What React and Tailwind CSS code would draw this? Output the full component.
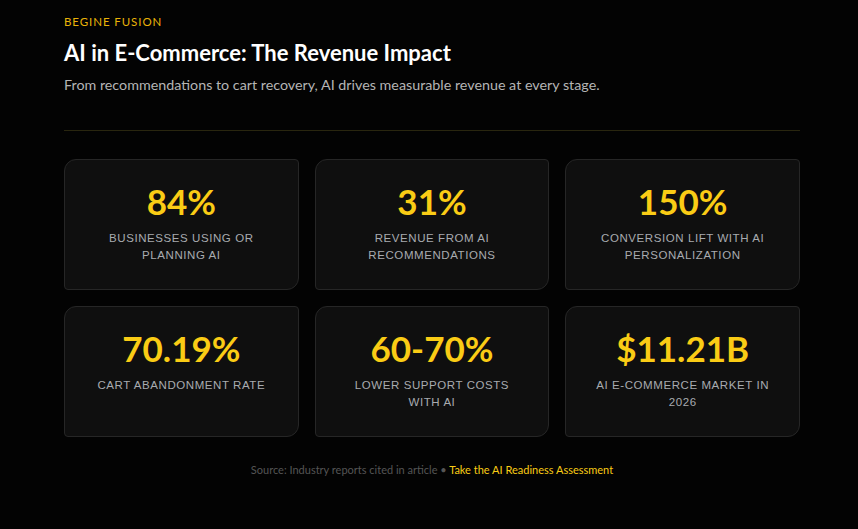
import React from "react";

const stats = [
  { value: "84%", label: "Businesses using or planning AI" },
  { value: "31%", label: "Revenue from AI recommendations" },
  { value: "150%", label: "Conversion lift with AI personalization" },
  { value: "70.19%", label: "Cart abandonment rate" },
  { value: "60-70%", label: "Lower support costs with AI" },
  { value: "$11.21B", label: "AI e-commerce market in 2026" },
];

const StatCard = ({ value, label }) => (
  <div className="flex h-[131px] flex-col items-center rounded-tl-xl rounded-tr-[4px] rounded-br-xl rounded-bl-[4px] border border-[#262626] bg-[#0f0f0f] px-6 pt-[24px] text-center">
    <div className="text-[35px] font-bold leading-none text-[#facc15]">{value}</div>
    <div
      className="mt-[11px] max-w-[185px] text-[11.5px] uppercase leading-[17px] tracking-[0.05em] text-[#a8abb0]"
      style={{ fontFamily: "'Liberation Sans', Arial, sans-serif" }}
    >
      {label}
    </div>
  </div>
);

export default function App() {
  return (
    <div
      className="min-h-[529px] w-full bg-[#030303] pl-16 pt-[13px]"
      style={{ fontFamily: "Lato, 'Liberation Sans', sans-serif" }}
    >
      <div className="w-[736px]">
        <p className="text-[11.5px] uppercase tracking-[0.08em] text-[#eab308]">Begine Fusion</p>
        <h1 className="mt-[9px] text-[22px] font-bold leading-tight text-white">
          AI in E-Commerce: The Revenue Impact
        </h1>
        <p className="mt-[7px] text-[14.3px] text-[#b5b5b5]">
          From recommendations to cart recovery, AI drives measurable revenue at every stage.
        </p>
        <hr className="mt-[35px] border-0 border-t border-[#29260f]" />
        <div className="mt-[28px] grid grid-cols-3 gap-4">
          {stats.map((s) => (
            <StatCard key={s.value} {...s} />
          ))}
        </div>
        <p className="mt-[25px] text-center text-[11px] text-[#555]">
          Source: Industry reports cited in article •{" "}
          <a href="#" className="text-[#facc15]">
            Take the AI Readiness Assessment
          </a>
        </p>
      </div>
    </div>
  );
}
